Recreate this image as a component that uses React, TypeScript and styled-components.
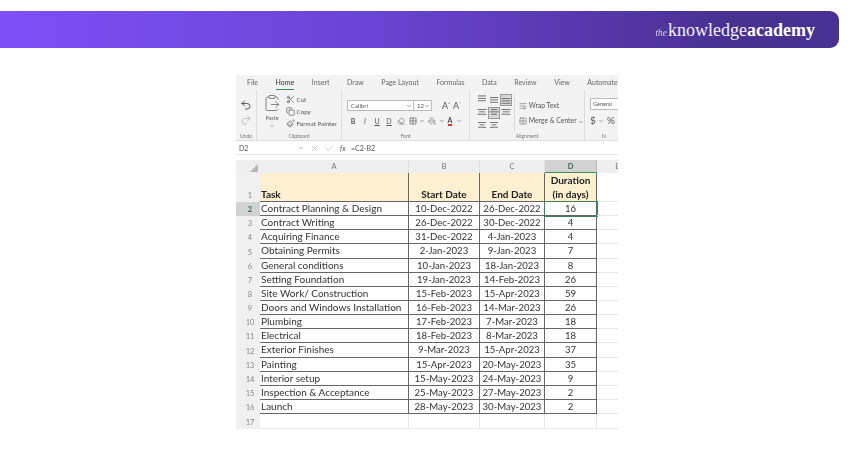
import styled, { createGlobalStyle } from 'styled-components';
import { Undo2, Redo2, Scissors, Copy, Paintbrush, ClipboardPaste, ChevronDown, X, Check, Grid2x2, WrapText, Eraser, PaintBucket } from 'lucide-react';

const rows = [
	['Contract Planning & Design', '10-Dec-2022', '26-Dec-2022', '16'],
	['Contract Writing', '26-Dec-2022', '30-Dec-2022', '4'],
	['Acquiring Finance', '31-Dec-2022', '4-Jan-2023', '4'],
	['Obtaining Permits', '2-Jan-2023', '9-Jan-2023', '7'],
	['General conditions', '10-Jan-2023', '18-Jan-2023', '8'],
	['Setting Foundation', '19-Jan-2023', '14-Feb-2023', '26'],
	['Site Work/ Construction', '15-Feb-2023', '15-Apr-2023', '59'],
	['Doors and Windows Installation', '16-Feb-2023', '14-Mar-2023', '26'],
	['Plumbing', '17-Feb-2023', '7-Mar-2023', '18'],
	['Electrical', '18-Feb-2023', '8-Mar-2023', '18'],
	['Exterior Finishes', '9-Mar-2023', '15-Apr-2023', '37'],
	['Painting', '15-Apr-2023', '20-May-2023', '35'],
	['Interior setup', '15-May-2023', '24-May-2023', '9'],
	['Inspection & Acceptance', '25-May-2023', '27-May-2023', '2'],
	['Launch', '28-May-2023', '30-May-2023', '2'],
];

const tabs = ['File', 'Home', 'Insert', 'Draw', 'Page Layout', 'Formulas', 'Data', 'Review', 'View', 'Automate'];

function AlignIcon({ widths, y = 1, active }: { widths: number[]; y?: number; active?: boolean }) {
	return (
		<AlignBox $active={active}>
			<svg width="10" height="9" viewBox="0 0 10 9">
				{widths.map((w, i) => (
					<rect key={i} x={(10 - w) / 2} y={y + i * 2.4} width={w} height="0.9" fill="#666" />
				))}
			</svg>
		</AlignBox>
	);
}

function App() {
	return (
		<>
			<GlobalStyle />
			<Banner>
				<Logo>
					<LogoThe>the</LogoThe>knowledge<LogoBold>academy</LogoBold>
				</Logo>
			</Banner>
			<Sheet>
				<TabBar>
					{tabs.map((tab) => (
						<Tab key={tab} $active={tab === 'Home'}>{tab}</Tab>
					))}
				</TabBar>
				<Ribbon>
					<RibbonGroup $width={21}>
						<UndoStack>
							<Undo2 size={12} color="#555" />
							<Redo2 size={12} color="#c2c2c2" />
						</UndoStack>
						<GroupLabel>Undo</GroupLabel>
					</RibbonGroup>
					<RibbonGroup $width={85}>
						<ClipboardRow>
							<PasteColumn>
								<ClipboardPaste size={18} color="#777" strokeWidth={1.2} />
								<span>Paste</span>
								<ChevronDown size={6} color="#666" />
							</PasteColumn>
							<ClipboardList>
								<span><Scissors size={9} color="#666" /> Cut</span>
								<span><Copy size={9} color="#666" /> Copy</span>
								<span><Paintbrush size={9} color="#777" /> Format Painter</span>
							</ClipboardList>
						</ClipboardRow>
						<GroupLabel>Clipboard</GroupLabel>
					</RibbonGroup>
					<RibbonGroup $width={128}>
						<FontArea>
							<FontTop>
								<FontBox>Calibri<ChevronDown size={6} color="#444" /></FontBox>
								<SizeBox>12<ChevronDown size={6} color="#444" /></SizeBox>
								<GrowLetter>A<sup>^</sup></GrowLetter>
								<GrowLetter>A<sup>˅</sup></GrowLetter>
							</FontTop>
							<FontTools>
								<b>B</b>
								<i>I</i>
								<u>U</u>
								<u>D</u>
								<Eraser size={8} color="#666" />
								<Grid2x2 size={8} color="#555" />
								<ChevronDown size={6} color="#555" />
								<PaintBucket size={8} color="#777" />
								<ChevronDown size={6} color="#555" />
								<ColorA>A</ColorA>
								<ChevronDown size={6} color="#555" />
							</FontTools>
						</FontArea>
						<GroupLabel>Font</GroupLabel>
					</RibbonGroup>
					<RibbonGroup $width={115}>
						<AlignArea>
							<AlignGrid>
								<AlignIcon widths={[8, 8, 8]} y={0.5} />
								<AlignIcon widths={[8, 8, 8]} y={2} />
								<AlignIcon widths={[9, 9, 9]} y={3} active />
								<AlignIcon widths={[9, 6, 9]} />
								<AlignIcon widths={[6, 9, 6]} active />
								<AlignIcon widths={[9, 7, 9]} />
								<AlignIcon widths={[8, 5, 8]} />
								<AlignIcon widths={[8, 5, 8]} />
							</AlignGrid>
							<WrapColumn>
								<span><WrapText size={8} color="#777" /> Wrap Text</span>
								<span><Grid2x2 size={8} color="#777" /> Merge &amp; Center <ChevronDown size={6} color="#555" /></span>
							</WrapColumn>
						</AlignArea>
						<GroupLabel>Alignment</GroupLabel>
					</RibbonGroup>
					<NumberGroup>
						<NumberBox>General</NumberBox>
						<NumberTools>$ <ChevronDown size={6} color="#555" /> %</NumberTools>
						<GroupLabel>N</GroupLabel>
					</NumberGroup>
				</Ribbon>
				<FormulaBar>
					<NameBox>D2<ChevronDown size={6} color="#666" /></NameBox>
					<FormulaIcons>
						<X size={9} color="#bbb" />
						<Check size={9} color="#bbb" />
						<i>fx</i>
					</FormulaIcons>
					<span>=C2-B2</span>
				</FormulaBar>
				<Grid>
					<Corner><CornerMark /></Corner>
					<ColHead>A</ColHead>
					<ColHead>B</ColHead>
					<ColHead>C</ColHead>
					<ColHead $active>D</ColHead>
					<ColHead>E</ColHead>

					<RowHead>1</RowHead>
					<TitleCell $left>Task</TitleCell>
					<TitleCell>Start Date</TitleCell>
					<TitleCell>End Date</TitleCell>
					<TitleCell>Duration<br />(in days)</TitleCell>
					<EmptyCell />

					{rows.map((row, i) => (
						<GridRow key={row[0]}>
							<RowHead $active={i === 0}>{i + 2}</RowHead>
							<DataCell $left>{row[0]}</DataCell>
							<DataCell>{row[1]}</DataCell>
							<DataCell>{row[2]}</DataCell>
							<DataCell $selected={i === 0}>{row[3]}</DataCell>
							<EmptyCell />
						</GridRow>
					))}

					<RowHead>17</RowHead>
					<EmptyCell />
					<EmptyCell />
					<EmptyCell />
					<EmptyCell />
					<EmptyCell />
				</Grid>
			</Sheet>
		</>
	);
}

const GlobalStyle = createGlobalStyle`
	body {
		margin: 0;
		overflow: hidden;
		background: #fff;
		font-family: 'Lato', 'Open Sans', sans-serif;
	}
`;

const Banner = styled.header`
	display: flex;
	align-items: center;
	justify-content: flex-end;
	width: 839px;
	height: 37px;
	margin-top: 11px;
	padding-right: 24px;
	box-sizing: border-box;
	border-radius: 0 9px 9px 0;
	background: linear-gradient(90deg, #7d50f6 0%, #6a44d2 45%, #47308f 88%, #4a3294 100%);
`;

const Logo = styled.div`
	color: #f3f1fa;
	font-family: 'Liberation Serif', serif;
	font-size: 18px;
	line-height: 1;
	white-space: nowrap;
`;

const LogoThe = styled.span`
	margin-right: 1px;
	font-size: 9.5px;
	font-style: italic;
	opacity: 0.8;
`;

const LogoBold = styled.span`
	color: #fff;
	font-weight: 700;
`;

const Sheet = styled.section`
	width: 382px;
	margin: 27px 0 0 236px;
	overflow: hidden;
	background: #fff;
	color: #555;
	filter: blur(0.35px);
`;

const TabBar = styled.nav`
	display: flex;
	gap: 17.6px;
	height: 15px;
	padding: 1px 0 0 11px;
	box-sizing: border-box;
	background: #f3f3f3;
	white-space: nowrap;
`;

const Tab = styled.span<{ $active?: boolean }>`
	height: 14px;
	box-sizing: border-box;
	border-bottom: ${({ $active }) => ($active ? '1.5px solid #3f8a5f' : 'none')};
	color: ${({ $active }) => ($active ? '#333' : '#666')};
	font-size: 7px;
	line-height: 12px;
`;

const Ribbon = styled.div`
	display: flex;
	height: 50px;
	border-bottom: 1px solid #ddd;
	background: #f3f3f3;
`;

const RibbonGroup = styled.div<{ $width: number }>`
	display: flex;
	flex-direction: column;
	flex: none;
	justify-content: space-between;
	width: ${({ $width }) => $width}px;
	padding: 4px 0 0;
	box-sizing: border-box;
	border-right: 1px solid #ddd;
`;

const GroupLabel = styled.div`
	height: 9px;
	color: #777;
	font-size: 5px;
	line-height: 10px;
	text-align: center;
`;

const UndoStack = styled.div`
	display: flex;
	flex-direction: column;
	align-items: center;
	gap: 3px;
	padding-top: 5px;
`;

const ClipboardRow = styled.div`
	display: flex;
	gap: 6px;
	padding-left: 7px;
`;

const PasteColumn = styled.div`
	display: flex;
	flex-direction: column;
	align-items: center;
	width: 16px;
	color: #666;
	font-size: 5.5px;
	line-height: 9px;

	span {
		margin-top: 2px;
	}
`;

const ClipboardList = styled.div`
	display: flex;
	flex-direction: column;
	gap: 2.5px;
	padding-top: 1px;
	font-size: 6.2px;
	line-height: 9.5px;
	white-space: nowrap;

	svg {
		vertical-align: -2px;
	}
`;

const FontArea = styled.div`
	display: flex;
	flex-direction: column;
	gap: 5px;
	padding: 6px 0 0 5px;
`;

const FontTop = styled.div`
	display: flex;
	align-items: center;
`;

const FontBox = styled.div`
	display: flex;
	align-items: center;
	justify-content: space-between;
	width: 67px;
	height: 11px;
	padding: 0 1px 0 3px;
	box-sizing: border-box;
	border: 1px solid #bbb;
	background: #fff;
	font-size: 6px;
`;

const SizeBox = styled(FontBox)`
	width: 18px;
	margin-right: 10px;
	border-left: none;
`;

const GrowLetter = styled.span`
	width: 11px;
	font-size: 9px;

	sup {
		font-size: 4px;
	}
`;

const FontTools = styled.div`
	display: grid;
	grid-template-columns: repeat(6, 12px) 6px 14px 6px 10px 8px;
	align-items: center;
	justify-items: center;
	font-size: 7px;
`;

const ColorA = styled.span`
	border-bottom: 2px solid #d33;
	color: #444;
	font-weight: 700;
	line-height: 8px;
`;

const AlignArea = styled.div`
	display: flex;
	gap: 4px;
	padding-left: 6px;
`;

const AlignGrid = styled.div`
	display: grid;
	grid-template-columns: repeat(3, 12px);
	grid-auto-rows: 11.5px;
	row-gap: 1.5px;
	flex: none;
	width: 39px;
	height: 37px;
	box-sizing: border-box;
	border-right: 1px solid #ddd;
`;

const AlignBox = styled.div<{ $active?: boolean }>`
	display: flex;
	align-items: center;
	justify-content: center;
	border: 1px solid ${({ $active }) => ($active ? '#999' : 'transparent')};
	background: ${({ $active }) => ($active ? '#d8d8d8' : 'transparent')};
`;

const WrapColumn = styled.div`
	display: flex;
	flex-direction: column;
	gap: 6px;
	padding-top: 7px;
	font-size: 6.8px;
	line-height: 9px;
	white-space: nowrap;

	svg {
		vertical-align: -1.5px;
	}
`;

const NumberGroup = styled.div`
	display: flex;
	flex-direction: column;
	flex: 1;
	padding: 8px 0 0 5px;
	overflow: hidden;
`;

const NumberBox = styled.div`
	height: 10px;
	margin-right: -10px;
	padding-left: 2px;
	border: 1px solid #bbb;
	background: #fff;
	font-size: 5.5px;
	line-height: 10px;
`;

const NumberTools = styled.div`
	flex: 1;
	padding-top: 4px;
	font-size: 10px;
	white-space: nowrap;
`;

const FormulaBar = styled.div`
	display: flex;
	align-items: center;
	height: 12px;
	margin-top: 1px;
	border-bottom: 1px solid #e8e8e8;
	font-size: 7px;
`;

const NameBox = styled.div`
	display: flex;
	align-items: center;
	justify-content: space-between;
	width: 65px;
	padding-left: 3px;
`;

const FormulaIcons = styled.div`
	display: flex;
	align-items: center;
	gap: 6px;
	width: 47px;
	padding-left: 6px;
	box-sizing: border-box;
`;

const Grid = styled.div`
	display: grid;
	grid-template-columns: 24px 149px 71px 65px 52px 42px;
	grid-template-rows: 13px 29px repeat(15, 14.15px) 15px;
	margin-top: 5px;
	color: #333;
	font-size: 10px;
`;

const GridRow = styled.div`
	display: contents;
`;

const Corner = styled.div`
	display: flex;
	align-items: flex-end;
	justify-content: flex-end;
	padding: 0 2px 1px 0;
	background: #efefef;
`;

const CornerMark = styled.div`
	width: 0;
	height: 0;
	border-bottom: 8px solid #b5b5b5;
	border-left: 8px solid transparent;
`;

const ColHead = styled.div<{ $active?: boolean }>`
	border-right: 1px solid ${({ $active }) => ($active ? '#bbb' : '#e0e0e0')};
	border-bottom: ${({ $active }) => ($active ? '1px solid #3f8a5f' : 'none')};
	background: ${({ $active }) => ($active ? '#d2d2d2' : '#efefef')};
	color: ${({ $active }) => ($active ? '#2f6b4a' : '#777')};
	font-size: 7.5px;
	font-weight: ${({ $active }) => ($active ? 700 : 400)};
	line-height: 13px;
	text-align: center;
`;

const RowHead = styled.div<{ $active?: boolean }>`
	display: flex;
	align-items: flex-end;
	justify-content: center;
	padding-left: 4px;
	background: ${({ $active }) => ($active ? '#d2d2d2' : '#f0f0f0')};
	color: ${({ $active }) => ($active ? '#2f6b4a' : '#888')};
	font-size: 7.5px;
	font-weight: ${({ $active }) => ($active ? 700 : 400)};
	line-height: 13px;
`;

const TitleCell = styled.div<{ $left?: boolean }>`
	display: flex;
	align-items: flex-end;
	justify-content: ${({ $left }) => ($left ? 'flex-start' : 'center')};
	padding: 0 1px;
	box-sizing: border-box;
	border-right: 1px solid #666;
	border-bottom: 1px solid #666;
	background: #fdf0d0;
	color: #222;
	font-weight: 700;
	line-height: 14px;
	text-align: ${({ $left }) => ($left ? 'left' : 'center')};
`;

const DataCell = styled.div<{ $left?: boolean; $selected?: boolean }>`
	padding: 0 1px;
	overflow: hidden;
	box-sizing: border-box;
	border-right: 1px solid #666;
	border-bottom: 1px solid #666;
	outline: ${({ $selected }) => ($selected ? '1px solid #3f7f5a' : 'none')};
	font-size: ${({ $left }) => ($left ? 10 : 9.6)}px;
	line-height: 13.5px;
	text-align: ${({ $left }) => ($left ? 'left' : 'center')};
	white-space: nowrap;
`;

const EmptyCell = styled.div`
	box-sizing: border-box;
	border-right: 1px solid #e6e6e6;
	border-bottom: 1px solid #e6e6e6;
`;

export default App;
